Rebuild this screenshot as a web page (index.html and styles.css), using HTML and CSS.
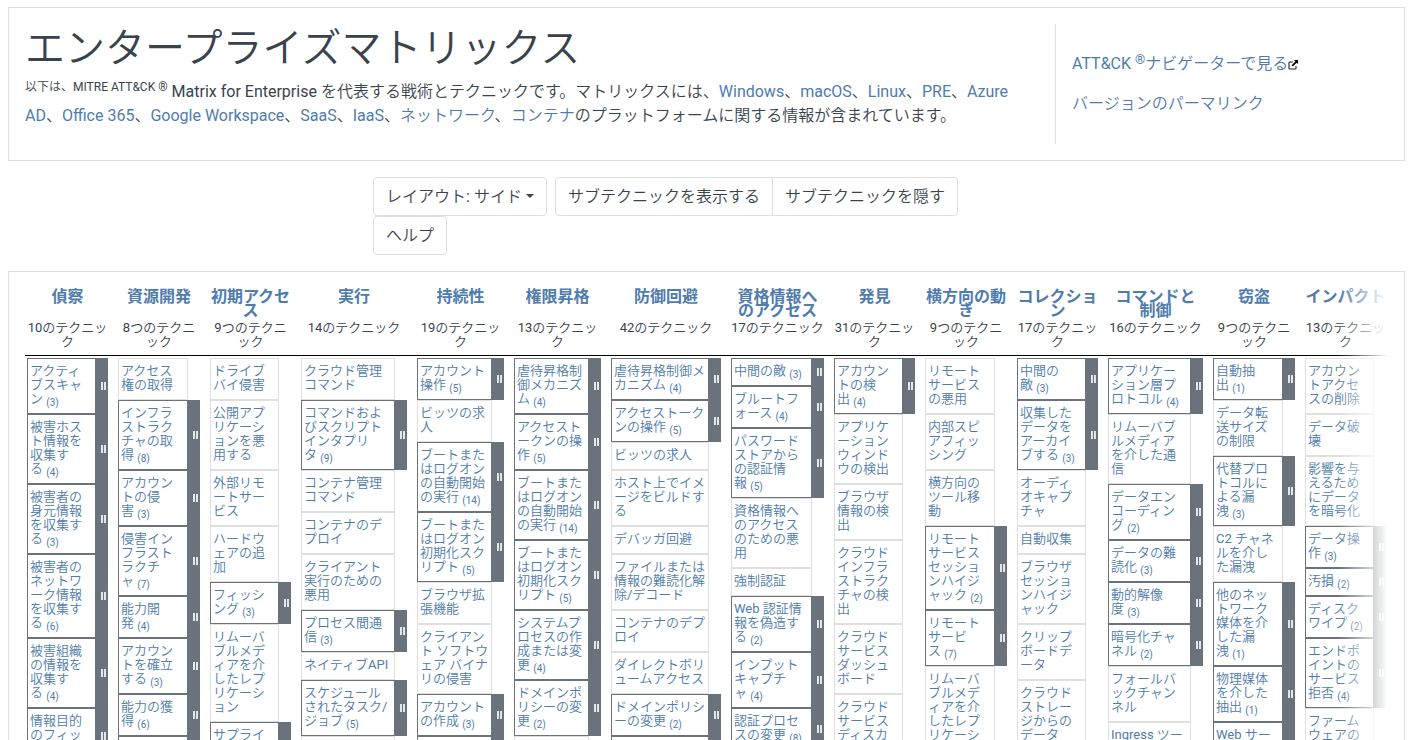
FILE: index.html
```html
<!DOCTYPE html>
<html lang="ja">
<head>
    <meta charset="UTF-8">
    <meta name="viewport" content="width=device-width, initial-scale=1.0">
    <title>エンタープライズマトリックス</title>
    <link rel="stylesheet" href="styles.css">
</head>
<body>
    <div class="card intro">
        <div class="intro-text">
            <h1>エンタープライズマトリックス</h1>
            <p><sup>以下は、MITRE ATT&amp;CK ®</sup> Matrix for Enterprise を代表する戦術とテクニックです。マトリックスには、<a>Windows</a>、<a>macOS</a>、<a>Linux</a>、<a>PRE</a>、<a>Azure<br>AD</a>、<a>Office 365</a>、<a>Google Workspace</a>、<a>SaaS</a>、<a>IaaS</a>、<a>ネットワーク</a>、<a>コンテナ</a>のプラットフォームに関する情報が含まれています。</p>
        </div>
        <div class="intro-links">
            <p><a>ATT&amp;CK <sup class="reg">®</sup>ナビゲーターで見る</a><svg class="ext" viewBox="0 0 10 10" width="10" height="10"><path d="M5 2H1.8Q1 2 1 2.8V8.2Q1 9 1.8 9H7.2Q8 9 8 8.2V6" fill="none" stroke="#222" stroke-width="1.1"/><path d="M6 0H10V4L8.6 2.7L4.8 6.5L3.6 5.3L7.4 1.5Z" fill="#000"/></svg></p>
            <p><a>バージョンのパーマリンク</a></p>
        </div>
    </div>

    <!-- レイアウト操作 -->
    <div class="controls">
        <button class="btn layout">レイアウト: サイド<span class="caret"></span></button>
        <div class="btn-group">
            <button class="btn show">サブテクニックを表示する</button>
            <button class="btn hide">サブテクニックを隠す</button>
        </div>
        <button class="btn help">ヘルプ</button>
    </div>

    <!-- マトリックス -->
    <div class="card matrix">
        <div class="row heads">
            <div class="head"><h2>偵察</h2><p>10のテクニッ<br>ク</p></div>
            <div class="head"><h2>資源開発</h2><p>8つのテクニ<br>ック</p></div>
            <div class="head"><h2>初期アクセ<br>ス</h2><p>9つのテクニ<br>ック</p></div>
            <div class="head"><h2>実行</h2><p>14のテクニック</p></div>
            <div class="head"><h2>持続性</h2><p>19のテクニッ<br>ク</p></div>
            <div class="head"><h2>権限昇格</h2><p>13のテクニッ<br>ク</p></div>
            <div class="head"><h2>防御回避</h2><p>42のテクニック</p></div>
            <div class="head"><h2>資格情報へ<br>のアクセス</h2><p>17のテクニック</p></div>
            <div class="head"><h2>発見</h2><p>31のテクニッ<br>ク</p></div>
            <div class="head"><h2>横方向の動<br>き</h2><p>9つのテクニ<br>ック</p></div>
            <div class="head"><h2>コレクショ<br>ン</h2><p>17のテクニッ<br>ク</p></div>
            <div class="head"><h2>コマンドと<br>制御</h2><p>16のテクニック</p></div>
            <div class="head"><h2>窃盗</h2><p>9つのテクニ<br>ック</p></div>
            <div class="head"><h2>インパクト</h2><p>13のテクニッ<br>ク</p></div>
        </div>
        <div class="row cells">
            <div class="col">
                <div class="tech sub">アクティ<br>ブスキャ<br>ン <sub>(3)</sub></div>
                <div class="tech sub">被害ホス<br>ト情報を<br>収集す<br>る <sub>(4)</sub></div>
                <div class="tech sub">被害者の<br>身元情報<br>を収集す<br>る <sub>(3)</sub></div>
                <div class="tech sub">被害者の<br>ネットワ<br>ーク情報<br>を収集す<br>る <sub>(6)</sub></div>
                <div class="tech sub">被害組織<br>の情報を<br>収集す<br>る <sub>(4)</sub></div>
                <div class="tech sub">情報目的<br>のフィッ<br>シング <sub>(3)</sub></div>
            </div>
            <div class="col">
                <div class="tech">アクセス<br>権の取得</div>
                <div class="tech sub">インフラ<br>ストラク<br>チャの取<br>得 <sub>(8)</sub></div>
                <div class="tech sub">アカウン<br>トの侵<br>害 <sub>(3)</sub></div>
                <div class="tech sub">侵害イン<br>フラスト<br>ラクチ<br>ャ <sub>(7)</sub></div>
                <div class="tech sub">能力開<br>発 <sub>(4)</sub></div>
                <div class="tech sub">アカウン<br>トを確立<br>する <sub>(3)</sub></div>
                <div class="tech sub">能力の獲<br>得 <sub>(6)</sub></div>
                <div class="tech sub">ステージ<br>機能 <sub>(6)</sub></div>
            </div>
            <div class="col">
                <div class="tech">ドライブ<br>バイ侵害</div>
                <div class="tech">公開アプ<br>リケーシ<br>ョンを悪<br>用する</div>
                <div class="tech">外部リモ<br>ートサー<br>ビス</div>
                <div class="tech">ハードウ<br>ェアの追<br>加</div>
                <div class="tech sub">フィッシ<br>ング <sub>(3)</sub></div>
                <div class="tech">リムーバ<br>ブルメデ<br>ィアを介<br>したレプ<br>リケーシ<br>ョン</div>
                <div class="tech sub">サプライ<br>チェーン<br>の侵害 <sub>(3)</sub></div>
            </div>
            <div class="col">
                <div class="tech">クラウド管理<br>コマンド</div>
                <div class="tech sub">コマンドおよ<br>びスクリプト<br>インタプリ<br>タ <sub>(9)</sub></div>
                <div class="tech">コンテナ管理<br>コマンド</div>
                <div class="tech">コンテナのデ<br>プロイ</div>
                <div class="tech">クライアント<br>実行のための<br>悪用</div>
                <div class="tech sub">プロセス間通<br>信 <sub>(3)</sub></div>
                <div class="tech">ネイティブAPI</div>
                <div class="tech sub">スケジュール<br>されたタスク/<br>ジョブ <sub>(5)</sub></div>
                <div class="tech">サーバーレス<br>実行</div>
            </div>
            <div class="col">
                <div class="tech sub">アカウント<br>操作 <sub>(5)</sub></div>
                <div class="tech">ビッツの求<br>人</div>
                <div class="tech sub">ブートまた<br>はログオン<br>の自動開始<br>の実行 <sub>(14)</sub></div>
                <div class="tech sub">ブートまた<br>はログオン<br>初期化スク<br>リプト <sub>(5)</sub></div>
                <div class="tech">ブラウザ拡<br>張機能</div>
                <div class="tech">クライアン<br>ト ソフトウ<br>ェア バイナ<br>リの侵害</div>
                <div class="tech sub">アカウント<br>の作成 <sub>(3)</sub></div>
                <div class="tech sub">システムプ<br>ロセス <sub>(4)</sub></div>
            </div>
            <div class="col">
                <div class="tech sub">虐待昇格制<br>御メカニズ<br>ム <sub>(4)</sub></div>
                <div class="tech sub">アクセスト<br>ークンの操<br>作 <sub>(5)</sub></div>
                <div class="tech sub">ブートまた<br>はログオン<br>の自動開始<br>の実行 <sub>(14)</sub></div>
                <div class="tech sub">ブートまた<br>はログオン<br>初期化スク<br>リプト <sub>(5)</sub></div>
                <div class="tech sub">システムプ<br>ロセスの作<br>成または変<br>更 <sub>(4)</sub></div>
                <div class="tech sub">ドメインポ<br>リシーの変<br>更 <sub>(2)</sub></div>
                <div class="tech">ホストへの<br>エスケープ</div>
            </div>
            <div class="col">
                <div class="tech sub">虐待昇格制御メ<br>カニズム <sub>(4)</sub></div>
                <div class="tech sub">アクセストーク<br>ンの操作 <sub>(5)</sub></div>
                <div class="tech">ビッツの求人</div>
                <div class="tech">ホスト上でイメ<br>ージをビルドす<br>る</div>
                <div class="tech">デバッガ回避</div>
                <div class="tech">ファイルまたは<br>情報の難読化解<br>除/デコード</div>
                <div class="tech">コンテナのデプ<br>ロイ</div>
                <div class="tech">ダイレクトボリ<br>ュームアクセス</div>
                <div class="tech sub">ドメインポリシ<br>ーの変更 <sub>(2)</sub></div>
                <div class="tech sub">実行ガードレー<br>ル <sub>(1)</sub></div>
            </div>
            <div class="col">
                <div class="tech sub">中間の敵 <sub>(3)</sub></div>
                <div class="tech sub">ブルートフ<br>ォース <sub>(4)</sub></div>
                <div class="tech sub">パスワード<br>ストアから<br>の認証情<br>報 <sub>(5)</sub></div>
                <div class="tech">資格情報へ<br>のアクセス<br>のための悪<br>用</div>
                <div class="tech">強制認証</div>
                <div class="tech sub">Web 認証情<br>報を偽造す<br>る <sub>(2)</sub></div>
                <div class="tech sub">インプット<br>キャプチ<br>ャ <sub>(4)</sub></div>
                <div class="tech sub">認証プロセ<br>スの変更 <sub>(8)</sub></div>
            </div>
            <div class="col">
                <div class="tech sub">アカウン<br>トの検<br>出 <sub>(4)</sub></div>
                <div class="tech">アプリケ<br>ーション<br>ウィンド<br>ウの検出</div>
                <div class="tech">ブラウザ<br>情報の検<br>出</div>
                <div class="tech">クラウド<br>インフラ<br>ストラク<br>チャの検<br>出</div>
                <div class="tech">クラウド<br>サービス<br>ダッシュ<br>ボード</div>
                <div class="tech">クラウド<br>サービス<br>ディスカ<br>バリ</div>
            </div>
            <div class="col">
                <div class="tech">リモート<br>サービス<br>の悪用</div>
                <div class="tech">内部スピ<br>アフィッ<br>シング</div>
                <div class="tech">横方向の<br>ツール移<br>動</div>
                <div class="tech sub">リモート<br>サービス<br>セッショ<br>ンハイジ<br>ャック <sub>(2)</sub></div>
                <div class="tech sub">リモート<br>サービ<br>ス <sub>(7)</sub></div>
                <div class="tech">リムーバ<br>ブルメデ<br>ィアを介<br>したレプ<br>リケーシ<br>ョン</div>
            </div>
            <div class="col">
                <div class="tech sub">中間の<br>敵 <sub>(3)</sub></div>
                <div class="tech sub">収集した<br>データを<br>アーカイ<br>ブする <sub>(3)</sub></div>
                <div class="tech">オーディ<br>オキャプ<br>チャ</div>
                <div class="tech">自動収集</div>
                <div class="tech">ブラウザ<br>セッショ<br>ンハイジ<br>ャック</div>
                <div class="tech">クリップ<br>ボードデ<br>ータ</div>
                <div class="tech">クラウド<br>ストレー<br>ジからの<br>データ</div>
            </div>
            <div class="col">
                <div class="tech sub">アプリケー<br>ション層プ<br>ロトコル <sub>(4)</sub></div>
                <div class="tech">リムーバブ<br>ルメディア<br>を介した通<br>信</div>
                <div class="tech sub">データエン<br>コーディン<br>グ <sub>(2)</sub></div>
                <div class="tech sub">データの難<br>読化 <sub>(3)</sub></div>
                <div class="tech sub">動的解像<br>度 <sub>(3)</sub></div>
                <div class="tech sub">暗号化チャ<br>ネル <sub>(2)</sub></div>
                <div class="tech">フォールバ<br>ックチャン<br>ネル</div>
                <div class="tech">Ingress ツー<br>ル転送</div>
            </div>
            <div class="col">
                <div class="tech sub">自動抽<br>出 <sub>(1)</sub></div>
                <div class="tech">データ転<br>送サイズ<br>の制限</div>
                <div class="tech sub">代替プロ<br>トコルに<br>よる漏<br>洩 <sub>(3)</sub></div>
                <div class="tech">C2 チャネ<br>ルを介し<br>た漏洩</div>
                <div class="tech sub">他のネッ<br>トワーク<br>媒体を介<br>した漏<br>洩 <sub>(1)</sub></div>
                <div class="tech sub">物理媒体<br>を介した<br>抽出 <sub>(1)</sub></div>
                <div class="tech sub">Web サー<br>ビスの漏<br>洩 <sub>(3)</sub></div>
            </div>
            <div class="col">
                <div class="tech">アカウン<br>トアクセ<br>スの削除</div>
                <div class="tech">データ破<br>壊</div>
                <div class="tech">影響を与<br>えるため<br>にデータ<br>を暗号化</div>
                <div class="tech sub">データ操<br>作 <sub>(3)</sub></div>
                <div class="tech sub">汚損 <sub>(2)</sub></div>
                <div class="tech sub">ディスク<br>ワイプ <sub>(2)</sub></div>
                <div class="tech sub">エンドポ<br>イントの<br>サービス<br>拒否 <sub>(4)</sub></div>
                <div class="tech">ファーム<br>ウェアの<br>破損</div>
            </div>
        </div>
        <div class="fade"></div>
    </div>
</body>
</html>
```
FILE: styles.css
```css
*, *::before, *::after {
    box-sizing: border-box;
}
body {
    margin: 0;
    padding: 7px 10px 0 8px;
    height: 740px;
    overflow: hidden;
    background-color: #ffffff;
    color: #39434c;
    font-family: Roboto, "Noto Sans CJK JP DemiLight", "Noto Sans CJK JP", sans-serif;
    font-size: 16px;
    line-height: 24px;
}
h1, h2, p {
    margin: 0;
}
a {
    color: #4f7cac;
}
.card {
    border: 1px solid #dfdfdf;
}

/* Cabecera */
.intro {
    display: flex;
    height: 154px;
    padding: 16px;
}
.intro-text {
    width: 1030px;
    white-space: nowrap;
}
h1 {
    font-size: 40px;
    font-weight: 350;
    line-height: 48px;
    padding-top: 1px;
    margin-bottom: 7px;
}
sup {
    font-size: 12px;
    line-height: 0;
    position: relative;
    top: -6px;
    vertical-align: baseline;
}
.reg {
    font-size: 13px;
    top: -5px;
}
.intro-links {
    height: 120px;
    padding: 28px 0 0 16px;
    border-left: 1px solid #dfdfdf;
}
.intro-links p {
    margin-bottom: 16px;
}
.ext {
    vertical-align: -1px;
}

/* Botones */
.controls {
    display: flex;
    flex-wrap: wrap;
    column-gap: 8px;
    width: 630px;
    margin: 16px 0 16px 365px;
}
.btn-group {
    display: flex;
}
.btn {
    height: 39px;
    padding: 0 0 3px;
    border: 1px solid #dfdfdf;
    border-radius: 4px;
    background-color: #ffffff;
    color: #39434c;
    font-family: inherit;
    font-size: 16px;
    white-space: nowrap;
}
.layout {
    width: 174px;
}
.show {
    width: 218px;
    border-radius: 4px 0 0 4px;
}
.hide {
    width: 186px;
    margin-left: -1px;
    border-radius: 0 4px 4px 0;
}
.help {
    width: 74px;
}
.caret {
    display: inline-block;
    margin-left: 4px;
    vertical-align: 4px;
    border-top: 4px solid #39434c;
    border-left: 4px solid transparent;
    border-right: 4px solid transparent;
}

/* Matriz */
.matrix {
    position: relative;
    height: 469px;
    padding: 17px 16px 0;
    border-bottom: 0;
    overflow: hidden;
    font-size: 13px;
    line-height: 14px;
    white-space: nowrap;
}
.row {
    display: grid;
    grid-template-columns: 81px 82px 81px 106px 87px 87px 110px 93px 81px 82px 81px 95px 82px 81px;
    column-gap: 10px;
    width: 1363px;
    padding-left: 2px;
}
.heads {
    height: 67px;
    border-bottom: 1px solid #000000;
    text-align: center;
}
.head {
    display: flex;
    flex-direction: column;
    align-items: center;
}
h2 {
    height: 32px;
    padding-top: 1px;
    color: #4f7cac;
    font-family: Roboto, "Noto Sans CJK JP", sans-serif;
    font-size: 16px;
    font-weight: 700;
    line-height: 14px;
}
.cells {
    padding-top: 2px;
}
.tech {
    position: relative;
    margin-right: 12px;
    padding: 5px 0 7px 2px;
    border: 1px solid #dfdfdf;
    color: #4f7cac;
}
.sub {
    border-color: #6a737b;
}
sub {
    font-size: 10px;
    line-height: 0;
    position: relative;
    top: 3px;
    vertical-align: baseline;
}
/* barra lateral de subtécnicas */
.sub::before {
    content: "";
    position: absolute;
    top: -1px;
    bottom: -1px;
    right: -13px;
    width: 13px;
    background-color: #6a737b;
}
.sub::after {
    content: "";
    position: absolute;
    top: calc(50% - 4px);
    right: -11px;
    width: 5px;
    height: 8px;
    border: solid #e4e6e8;
    border-width: 0 2px;
}
.fade {
    position: absolute;
    top: 0;
    bottom: 0;
    right: 16px;
    width: 50px;
    background: linear-gradient(to right, rgba(255, 255, 255, 0), #ffffff);
}
```
